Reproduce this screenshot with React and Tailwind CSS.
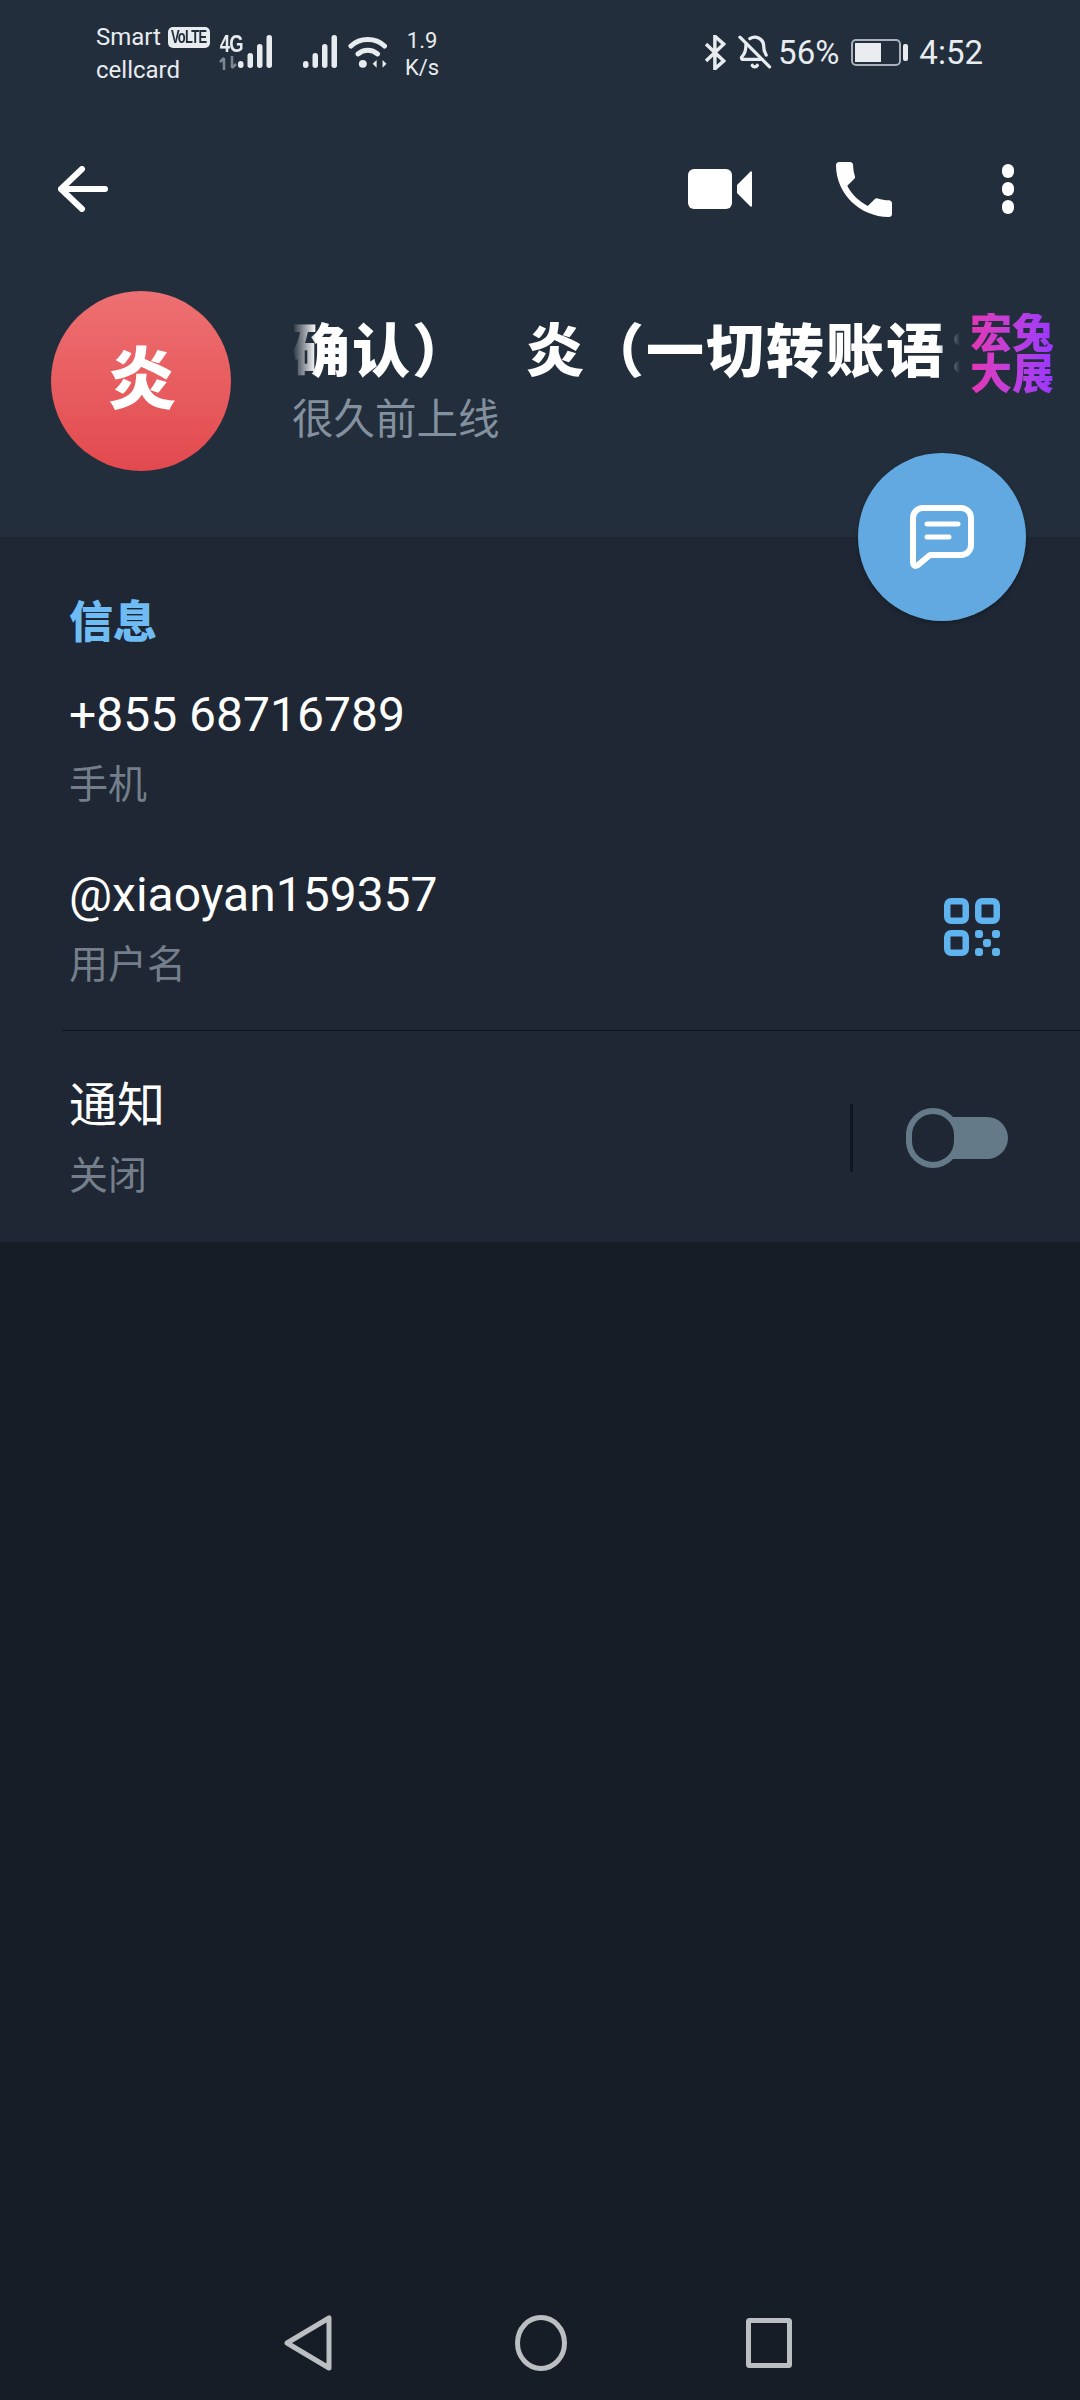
import React from 'react';
import { BellOff } from 'lucide-react';

const sans = "font-['Roboto','Noto_Sans_CJK_SC',sans-serif]";

const Bars = () => (
  <svg width="34" height="34" viewBox="0 0 34 34" fill="#e8ecef">
    <rect x="0" y="26" width="5.5" height="7" rx="2.7" />
    <rect x="9.5" y="18" width="5.5" height="15" rx="2.7" />
    <rect x="19" y="9" width="5.5" height="24" rx="2.7" />
    <rect x="28.5" y="0" width="5.5" height="33" rx="2.7" />
  </svg>
);

const StatusBar = () => (
  <div className="flex items-start h-[90px] pl-[96px] pr-[97px] text-[#e8ecef]">
    <div className="flex flex-col w-[125px] text-[24px] leading-[34px] pt-[20px]">
      <div className="flex items-center">
        <span>Smart</span>
        <span className="flex items-center justify-center ml-[7px] w-[42px] h-[21px] rounded-[5px] bg-[#e8ecef] text-[#222e3c] text-[18px] font-bold font-['Liberation_Sans',sans-serif]">
          <span className="inline-block scale-x-[0.72] tracking-[-1px]">VoLTE</span>
        </span>
      </div>
      <span className="-mt-[1px]">cellcard</span>
    </div>
    <div className="relative w-[52px] h-[40px] mt-[35px]">
      <span className="absolute -left-[2px] -top-[1px] inline-block text-[23px] leading-[21px] font-bold tracking-[-1px] scale-x-[0.8] font-['Liberation_Sans',sans-serif]">4G</span>
      <svg className="absolute left-0 top-[21px]" width="18" height="14" viewBox="0 0 18 14" fill="none" stroke="#7d8793" strokeWidth="2.5">
        <path d="M5 14V2M1 6l4-4M13 0v12M17 8l-4 4" />
      </svg>
      <div className="absolute left-[19px] top-0"><Bars /></div>
    </div>
    <div className="mt-[35px] ml-[32px]"><Bars /></div>
    <svg className="mt-[35px] ml-[11px]" width="40" height="35" viewBox="0 0 40 35" fill="none" stroke="#e8ecef" strokeWidth="5" strokeLinecap="round">
      <path d="M3 11C12 2 28 2 37 11" />
      <path d="M10 19c6-5 14-5 20 0" />
      <circle cx="15" cy="29" r="4" fill="#e8ecef" stroke="none" />
      <path d="M25 29l4-4v8zM39 29l-4-4v8z" fill="#e8ecef" stroke="none" />
    </svg>
    <div className="flex flex-col items-center w-[36px] ml-[17px] mt-[27px] text-[22px] leading-[27px]">
      <span>1.9</span>
      <span>K/s</span>
    </div>
    <svg className="ml-[265px] mt-[35px]" width="21" height="35" viewBox="0 0 21 35" fill="none" stroke="#e8ecef" strokeWidth="3.5">
      <path d="M1 9l18 17-9 8V1l9 8L1 26" />
    </svg>
    <BellOff className="ml-[11px] mt-[32px] w-[36px] h-[40px]" color="#e8ecef" strokeWidth={2.2} />
    <span className="ml-[6px] mt-[33px] text-[33px] leading-[40px]">56%</span>
    <div className="flex items-center ml-[12px] mt-[39px]">
      <div className="w-[50px] h-[27px] rounded-[5px] border-2 border-[#a9b1ba] p-[2px]">
        <div className="w-[26px] h-full bg-[#e8ecef]" />
      </div>
      <div className="w-[5px] h-[17px] ml-[2px] rounded-[2px] bg-[#e8ecef]" />
    </div>
    <span className="ml-[11px] mt-[33px] text-[33px] leading-[40px]">4:52</span>
  </div>
);

const Toolbar = () => (
  <div className="flex items-center h-[100px] mt-[49px] pl-[58px] pr-[66px]">
    <svg width="50" height="46" viewBox="0 0 50 46" fill="none" stroke="#fff" strokeWidth="6" strokeLinecap="round" strokeLinejoin="round">
      <path d="M47 23H3M24 3L3 23l21 20" />
    </svg>
    <svg className="ml-auto" width="64" height="40" viewBox="0 0 64 40" fill="#fff">
      <rect x="0" y="0" width="44" height="40" rx="6" />
      <path d="M49 16L62 3a1 1 0 0 1 2 1v32a1 1 0 0 1-2 1L49 24z" />
    </svg>
    <svg className="ml-[84px]" width="56" height="55" viewBox="3 3 18 18" preserveAspectRatio="none" fill="#fff">
      <path d="M6.62 10.79c1.44 2.83 3.76 5.14 6.59 6.59l2.2-2.2c.27-.27.67-.36 1.02-.24 1.12.37 2.33.57 3.57.57.55 0 1 .45 1 1V20c0 .55-.45 1-1 1-9.39 0-17-7.61-17-17 0-.55.45-1 1-1h3.5c.55 0 1 .45 1 1 0 1.25.2 2.45.57 3.57.11.35.03.74-.25 1.02l-2.2 2.2z" />
    </svg>
    <div className="flex flex-col gap-[4px] ml-[110px]">
      <div className="w-[12px] h-[14px] rounded-full bg-white" />
      <div className="w-[12px] h-[14px] rounded-full bg-white" />
      <div className="w-[12px] h-[14px] rounded-full bg-white" />
    </div>
  </div>
);

const Profile = () => (
  <div className="flex pl-[51px] mt-[52px]">
    <div className="flex items-center justify-center w-[180px] h-[180px] pl-[2px] rounded-full bg-gradient-to-b from-[#ee7072] to-[#e2494e] text-white text-[68px] font-black leading-none">
      炎
    </div>
    <div className="flex flex-col ml-[61px] mt-[29px] w-[668px]">
      <div className="w-[668px] overflow-hidden whitespace-pre text-white text-[58px] font-black leading-[64px] tracking-[2px] [mask-image:linear-gradient(to_right,transparent,black_24px,black_646px,transparent)]">
        确认）<span className="ml-[21px]">  炎（一切转账语：</span>
      </div>
      <div className="text-[#83909d] text-[41.5px] leading-[50px] mt-[11px]">很久前上线</div>
    </div>
    <div className="w-[84px] ml-[10px] mt-[22px] text-[42px] leading-[41px] font-black text-center bg-gradient-to-r from-[#e534b4] to-[#9a35ff] bg-clip-text text-transparent">
      宏兔大展
    </div>
  </div>
);

const InfoRow = ({ title, sub, right }) => (
  <div className="flex items-center justify-between pl-[69px]">
    <div className="flex flex-col">
      <div className="text-white text-[48px] leading-[60px]">{title}</div>
      <div className="text-[#747f8b] text-[39px] leading-[48px] mt-[16px]">{sub}</div>
    </div>
    {right}
  </div>
);

const QrIcon = () => (
  <svg className="mr-[80px]" width="56" height="58" viewBox="0 0 56 58" fill="#5fb3ee">
    <g fill="none" stroke="#5fb3ee" strokeWidth="6.5">
      <rect x="3.25" y="3.25" width="18.5" height="19.5" rx="4" />
      <rect x="34.25" y="3.25" width="18.5" height="19.5" rx="4" />
      <rect x="3.25" y="35.25" width="18.5" height="19.5" rx="4" />
    </g>
    <rect x="31" y="32" width="8" height="8" rx="3" />
    <rect x="48" y="32" width="8" height="8" rx="3" />
    <rect x="39" y="41" width="8" height="8" rx="3" />
    <rect x="31" y="50" width="8" height="8" rx="3" />
    <rect x="48" y="50" width="8" height="8" rx="3" />
  </svg>
);

const Switch = () => (
  <div className="flex items-center mr-[72px]">
    <div className="w-[3px] h-[68px] bg-[#10161d] mr-[53px]" />
    <div className="relative w-[102px] h-[42px] rounded-full bg-[#647a88]">
      <div className="absolute left-0 -top-[9px] w-[54px] h-[60px] rounded-full border-[6px] border-[#647a88] bg-[#1e2733]" />
    </div>
  </div>
);

const NavBar = () => (
  <div className="flex items-center justify-center mt-auto h-[87px] pb-[28px] pr-[4px]">
    <svg width="48" height="56" viewBox="0 0 48 56" fill="none" stroke="#bcbfc2" strokeWidth="5" strokeLinejoin="round">
      <path d="M45 3v50L3 28z" />
    </svg>
    <svg className="ml-[183px]" width="52" height="56" viewBox="0 0 52 56" fill="none" stroke="#bcbfc2" strokeWidth="5">
      <ellipse cx="26" cy="28" rx="23.5" ry="25.5" />
    </svg>
    <svg className="ml-[179px]" width="46" height="50" viewBox="0 0 46 50" fill="none" stroke="#bcbfc2" strokeWidth="5" strokeLinejoin="round">
      <rect x="2.5" y="2.5" width="41" height="45" rx="1" />
    </svg>
  </div>
);

export default function App() {
  return (
    <div className={`relative flex flex-col w-[1080px] h-[2400px] bg-[#161d26] ${sans}`}>
      <div className="h-[537px] bg-[#222e3c]">
        <StatusBar />
        <Toolbar />
        <Profile />
      </div>
      <div className="h-[705px] bg-[#1e2733]">
        <div className="pl-[69px] pt-[58px] text-[#6fbcf4] text-[44px] leading-[56px] font-black">信息</div>
        <div className="mt-[34px]"><InfoRow title="+855 68716789" sub="手机" /></div>
        <div className="mt-[56px]"><InfoRow title="@xiaoyan159357" sub="用户名" right={<QrIcon />} /></div>
        <div className="ml-[62px] mt-[41px] h-[1px] bg-[#0f141a]" />
        <div className="mt-[45px]"><InfoRow title="通知" sub="关闭" right={<Switch />} /></div>
      </div>
      <NavBar />
      <button className="absolute left-[858px] top-[453px] flex items-center justify-center w-[168px] h-[168px] rounded-full bg-[#62a9e2] shadow-[0_2px_4px_rgba(0,0,0,0.25)]">
        <svg width="64" height="64" viewBox="0 0 64 64" fill="none" stroke="#fff" strokeWidth="6" strokeLinejoin="round" strokeLinecap="round">
          <path d="M13 3H51a10 10 0 0 1 10 10V40a10 10 0 0 1-10 10H20L8 60Q3 63 3 56V13A10 10 0 0 1 13 3Z" />
          <path d="M17 19H48M17 32H39" strokeWidth="5" />
        </svg>
      </button>
    </div>
  );
}
